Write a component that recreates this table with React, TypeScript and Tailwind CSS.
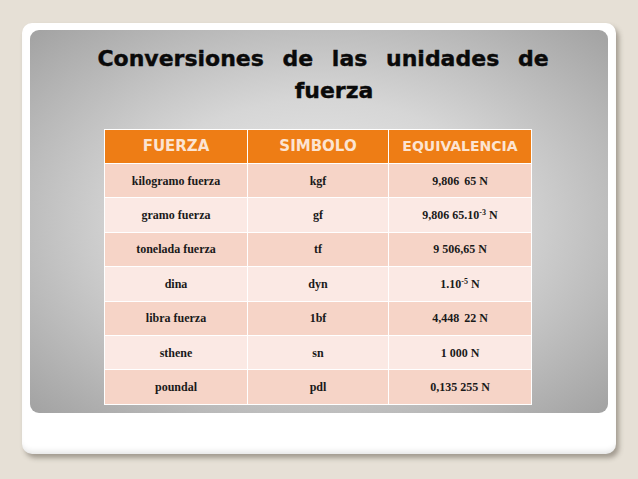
import React from 'react';

const rows = [
  { name: 'kilogramo fuerza', sym: 'kgf', eq: <>9,806 <span className="ml-[2px]">65 N</span></> },
  { name: 'gramo fuerza', sym: 'gf', eq: <>9,806 65.10<sup className="text-[8px]">-3</sup> N</> },
  { name: 'tonelada fuerza', sym: 'tf', eq: <>9 506,65 N</> },
  { name: 'dina', sym: 'dyn', eq: <>1.10<sup className="text-[8px]">-5</sup> N</> },
  { name: 'libra fuerza', sym: '1bf', eq: <>4,448 <span className="ml-[2px]">22 N</span></> },
  { name: 'sthene', sym: 'sn', eq: <>1 000 N</> },
  { name: 'poundal', sym: 'pdl', eq: <>0,135 255 N</> },
];

export default function App() {
  return (
    <div className="w-[638px] h-[479px] bg-[#e6e0d6] pl-[22px] pt-[23px]">
      <div className="w-[594px] h-[431px] bg-white rounded-[10px] shadow-[3px_4px_5px_rgba(80,70,60,0.45),inset_0_-6px_6px_-4px_rgba(0,0,0,0.12)] px-[8px] pt-[7px]">
        <div className="h-[383px] rounded-[9px] bg-[radial-gradient(ellipse_at_center,#ececec_0%,#d6d6d6_45%,#a2a2a2_100%)] pt-[13px]">
          <h1 className="text-center text-[22px] leading-[32px] font-bold text-[#0a0a0a] [word-spacing:11px] pl-[8px] [-webkit-text-stroke:0.4px_#0a0a0a]" style={{ fontFamily: '"DejaVu Sans", Verdana, sans-serif' }}>
            Conversiones de las unidades de
            <br />
            <span className="pl-[22px]">fuerza</span>
          </h1>
          <table className="mt-[22px] ml-[74px] w-[427px] table-fixed border-collapse">
            <thead>
              <tr className="h-[34px] bg-[#ee7d15] text-[#fce4d2]" style={{ fontFamily: '"DejaVu Sans", Verdana, sans-serif' }}>
                <th className="w-[143px] border border-white text-[15px] font-bold">FUERZA</th>
                <th className="w-[141px] border border-white text-[15px] font-bold">SIMBOLO</th>
                <th className="w-[143px] border border-white text-[14px] font-bold">EQUIVALENCIA</th>
              </tr>
            </thead>
            <tbody style={{ fontFamily: '"Liberation Serif", "Times New Roman", serif' }}>
              {rows.map((r, i) => (
                <tr key={r.name} className={`h-[34.4px] text-[12px] font-bold text-[#1a1a1a] ${i % 2 === 0 ? 'bg-[#f6d4c7]' : 'bg-[#fbe9e4]'}`}>
                  <td className="border border-white text-center">{r.name}</td>
                  <td className="border border-white text-center">{r.sym}</td>
                  <td className="border border-white text-center">{r.eq}</td>
                </tr>
              ))}
            </tbody>
          </table>
        </div>
      </div>
    </div>
  );
}
